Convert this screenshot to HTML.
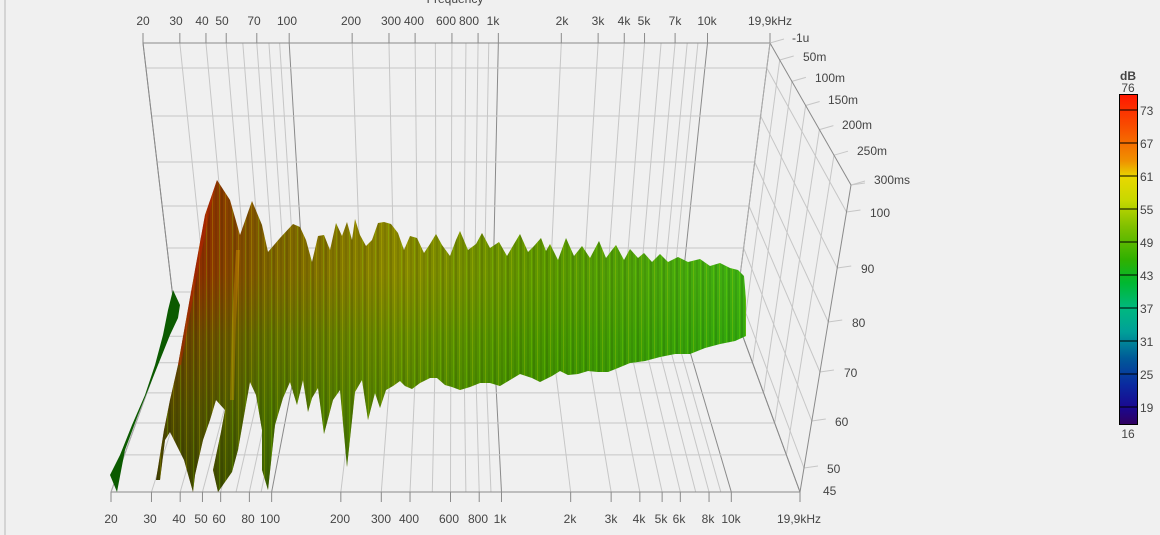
<!DOCTYPE html>
<html><head><meta charset="utf-8">
<style>
html,body{margin:0;padding:0;background:#f0f0f0;}
body{width:1160px;height:535px;overflow:hidden;position:relative;font-family:"Liberation Sans",sans-serif;}
svg{position:absolute;left:0;top:0;}
text{font-family:"Liberation Sans",sans-serif;font-size:12px;fill:#444;}
</style></head><body>
<svg id="s" width="1160" height="535" viewBox="0 0 1160 535" xmlns="http://www.w3.org/2000/svg">
<defs>
<linearGradient id="gh" x1="160" y1="0" x2="750" y2="0" gradientUnits="userSpaceOnUse">
<stop offset="0" stop-color="#8a1800"/>
<stop offset="0.08" stop-color="#8e3000"/>
<stop offset="0.18" stop-color="#806000"/>
<stop offset="0.4" stop-color="#8c8800"/>
<stop offset="0.65" stop-color="#5e9800"/>
<stop offset="1" stop-color="#3cb414"/>
</linearGradient>
<linearGradient id="gv" x1="0" y1="180" x2="0" y2="490" gradientUnits="userSpaceOnUse">
<stop offset="0" stop-color="#000" stop-opacity="0"/>
<stop offset="0.3" stop-color="#3a8a00" stop-opacity="0.05"/>
<stop offset="0.5" stop-color="#1a9000" stop-opacity="0.3"/>
<stop offset="0.75" stop-color="#0a8000" stop-opacity="0.45"/>
<stop offset="1" stop-color="#006000" stop-opacity="0.55"/>
</linearGradient>
<pattern id="st" width="13" height="20" patternUnits="userSpaceOnUse">
<rect x="0" y="0" width="2" height="20" fill="#000" opacity="0.12"/>
<rect x="4" y="0" width="1" height="20" fill="#e0e000" opacity="0.22"/>
<rect x="7" y="0" width="2" height="20" fill="#000" opacity="0.08"/>
<rect x="11" y="0" width="1" height="20" fill="#9f0" opacity="0.2"/>
</pattern>
<path id="main" d="M217,180 L230,200 L240,235 L252,201 L262,225 L268,252 L280,238 L293,224 L300,227 L306,240 L312,262 L318,236 L324,235 L330,250 L336,223 L342,236 L347,222 L352,240 L355,219 L360,235 L366,246 L372,240 L378,223 L384,222 L391,224 L398,233 L404,250 L410,236 L417,238 L424,253 L430,244 L436,234 L442,245 L450,256 L456,240 L460,231 L468,250 L476,244 L482,233 L490,248 L499,242 L507,256 L514,244 L520,234 L528,252 L534,246 L541,238 L546,251 L550,244 L558,260 L566,238 L574,256 L582,246 L590,258 L599,241 L606,258 L612,250 L616,245 L624,260 L630,249 L638,258 L644,253 L652,262 L660,254 L668,262 L678,257 L688,262 L700,259 L710,266 L720,263 L730,268 L738,270 L744,276 L746,300 L746,336 L735,341 L720,344 L705,348 L690,354 L675,354 L660,357 L645,361 L630,363 L618,368 L608,372 L598,372 L588,371 L578,374 L568,375 L560,371 L552,376 L540,382 L532,378 L520,374 L510,380 L500,386 L490,383 L480,383 L470,387 L460,390 L452,387 L445,385 L437,378 L430,378 L420,383 L412,389 L405,386 L400,381 L393,386 L386,390 L380,408 L375,393 L368,420 L362,380 L355,392 L347,467 L340,390 L333,400 L324,434 L318,388 L312,398 L308,412 L303,380 L297,405 L290,382 L283,398 L275,425 L268,490 L262,470 L262,430 L256,395 L250,382 L245,410 L238,450 L232,472 L218,492 L213,470 L221,432 L225,410 L216,400 L210,420 L203,440 L195,475 L193,492 L184,460 L170,432 L165,440 L160,480 L156,480 L164,430 L170,400 L178,365 L186,320 L195,270 L205,215 Z"/>
<linearGradient id="cb" x1="0" y1="95" x2="0" y2="424" gradientUnits="userSpaceOnUse">
<stop offset="0" stop-color="#ff1800"/>
<stop offset="0.1" stop-color="#f85000"/>
<stop offset="0.2" stop-color="#f09000"/>
<stop offset="0.25" stop-color="#e8d800"/>
<stop offset="0.32" stop-color="#c8d800"/>
<stop offset="0.4" stop-color="#80c000"/>
<stop offset="0.5" stop-color="#30b000"/>
<stop offset="0.57" stop-color="#00b830"/>
<stop offset="0.65" stop-color="#00b880"/>
<stop offset="0.72" stop-color="#00a098"/>
<stop offset="0.8" stop-color="#005a98"/>
<stop offset="0.88" stop-color="#0a2aa0"/>
<stop offset="0.95" stop-color="#1a0890"/>
<stop offset="1" stop-color="#300060"/>
</linearGradient>
</defs>
<line x1="5" y1="0" x2="5" y2="535" stroke="#b8b8b8"/>
<text x="455" y="3" text-anchor="middle">Frequency</text>
<g id="grid"></g>
<g text-anchor="middle">
<text x="143" y="25">20</text><text x="176" y="25">30</text><text x="202" y="25">40</text><text x="222" y="25">50</text><text x="254" y="25">70</text><text x="287" y="25">100</text><text x="351" y="25">200</text><text x="391" y="25">300</text><text x="414" y="25">400</text><text x="446" y="25">600</text><text x="469" y="25">800</text><text x="493" y="25">1k</text><text x="562" y="25">2k</text><text x="598" y="25">3k</text><text x="624" y="25">4k</text><text x="644" y="25">5k</text><text x="675" y="25">7k</text><text x="707" y="25">10k</text><text x="770" y="25">19,9kHz</text>
</g>
<g text-anchor="middle">
<text x="111" y="523">20</text><text x="150" y="523">30</text><text x="179" y="523">40</text><text x="201" y="523">50</text><text x="219" y="523">60</text><text x="248" y="523">80</text><text x="270" y="523">100</text><text x="340" y="523">200</text><text x="381" y="523">300</text><text x="409" y="523">400</text><text x="449" y="523">600</text><text x="478" y="523">800</text><text x="500" y="523">1k</text><text x="570" y="523">2k</text><text x="611" y="523">3k</text><text x="639" y="523">4k</text><text x="661" y="523">5k</text><text x="679" y="523">6k</text><text x="708" y="523">8k</text><text x="731" y="523">10k</text><text x="799" y="523">19,9kHz</text>
</g>
<g>
<text x="792" y="42">-1u</text><text x="803" y="61">50m</text><text x="815" y="82">100m</text><text x="828" y="104">150m</text><text x="842" y="129">200m</text><text x="857" y="155">250m</text><text x="874" y="184">300ms</text>
<text x="870" y="217">100</text><text x="861" y="273">90</text><text x="852" y="327">80</text><text x="844" y="377">70</text><text x="835" y="426">60</text><text x="827" y="473">50</text><text x="823" y="495">45</text>
</g>
<g id="surf">
<use href="#main" fill="url(#gh)"/>
<use href="#main" fill="url(#gv)"/>
<use href="#main" fill="url(#st)"/>
<path d="M173,290 L180,305 L178,318 L170,335 L160,360 L150,385 L138,415 L125,450 L117,492 L110,475 L120,455 L132,425 L145,395 L155,365 L163,335 L168,310 Z" fill="#0b5a00"/>
<path d="M217,180 L205,215 L195,270 L186,320 L178,365 L181,365 L189,320 L198,270 L209,215 Z" fill="#c02000" opacity="0.5"/>
<path d="M236,250 L232,320 L230,400 L234,400 L236,320 L240,250 Z" fill="#e0a000" opacity="0.35"/>
</g>
<rect x="1119.5" y="94.5" width="18" height="330" fill="url(#cb)" stroke="#000"/>
<g stroke="#000">
<line x1="1119" y1="110" x2="1137" y2="110"/><line x1="1119" y1="143" x2="1137" y2="143"/><line x1="1119" y1="176" x2="1137" y2="176"/><line x1="1119" y1="209" x2="1137" y2="209"/><line x1="1119" y1="242" x2="1137" y2="242"/><line x1="1119" y1="275" x2="1137" y2="275"/><line x1="1119" y1="308" x2="1137" y2="308"/><line x1="1119" y1="341" x2="1137" y2="341"/><line x1="1119" y1="374" x2="1137" y2="374"/><line x1="1119" y1="407" x2="1137" y2="407"/>
</g>
<g>
<text x="1128" y="80" text-anchor="middle" style="font-weight:bold">dB</text>
<text x="1128" y="92" text-anchor="middle">76</text>
<text x="1128" y="438" text-anchor="middle">16</text>
<text x="1140" y="115">73</text><text x="1140" y="148">67</text><text x="1140" y="181">61</text><text x="1140" y="214">55</text><text x="1140" y="247">49</text><text x="1140" y="280">43</text><text x="1140" y="313">37</text><text x="1140" y="346">31</text><text x="1140" y="379">25</text><text x="1140" y="412">19</text>
</g>
</svg>
<script>
(function(){
var g=document.getElementById('grid'),NS='http://www.w3.org/2000/svg';
function L(x1,y1,x2,y2,c,w){var e=document.createElementNS(NS,'line');e.setAttribute('x1',x1);e.setAttribute('y1',y1);e.setAttribute('x2',x2);e.setAttribute('y2',y2);e.setAttribute('stroke',c);e.setAttribute('stroke-width',w||1);g.appendChild(e);}
function lerp(a,b,t){return a+(b-a)*t;}
var LOG=Math.log10(19900/20);
function u(f){return Math.log10(f/20)/LOG;}
var maj=[20,100,1000,10000,19900];
var fr=[20,30,40,50,60,70,80,90,100,200,300,400,500,600,700,800,900,1000,2000,3000,4000,5000,6000,7000,8000,9000,10000,19900];
var lc='#c6c6c6',dc='#8a8a8a';
var dbs=[45,50,60,70,80,90,100,105],by=[315,292,248,206,162,116,68,43],fy=[492,468,421,372,322,268,212,185];
fr.forEach(function(f){var t=u(f),m=maj.indexOf(f)>=0,c=m?dc:lc;
 L(143+627*t,43,175+560*t,315,c);
 L(175+560*t,315,111+689*t,492,c);});
[20,30,40,50,70,100,200,300,400,600,800,1000,2000,3000,4000,5000,7000,10000,19900].forEach(function(f){var x=143+627*u(f);L(x,33,x,43,dc);});
[20,30,40,50,60,80,100,200,300,400,600,800,1000,2000,3000,4000,5000,6000,8000,10000,19900].forEach(function(f){var x=111+689*u(f);L(x,492,x,502,dc);});
for(var i=0;i<dbs.length;i++){var yb=by[i],v=(315-yb)/272,xl=lerp(175,143,v),xr=lerp(735,770,v);
 if(i>0)L(xl,yb,xr,yb,i==7?dc:lc);
 var yf=fy[i],vf=(492-yf)/307,xf=lerp(800,851,vf);
 if(i>0&&i<7)L(xr,yb,xf,yf,lc);
 if(i>0){L(xf,yf,xf+14,yf-2,lc);} }
var tf=[0,0.12,0.27,0.44,0.61,0.79,1];
tf.forEach(function(f,k){var tx=lerp(770,851,f),ty=lerp(43,185,f),bx=lerp(735,800,f),byy=lerp(315,492,f),lx=lerp(175,111,f);
 if(k>0&&k<6){L(tx,ty,bx,byy,lc);L(lx,byy,bx,byy,lc);}
 L(tx,ty,tx+14,ty-4,lc);});
L(143,43,770,43,dc);L(770,43,851,185,dc);L(851,185,800,492,dc);L(111,492,800,492,dc);L(735,315,800,492,dc);L(143,43,175,315,dc);L(770,43,735,315,'#aaa');L(175,315,111,492,'#aaa');
})();
</script>
</body></html>
